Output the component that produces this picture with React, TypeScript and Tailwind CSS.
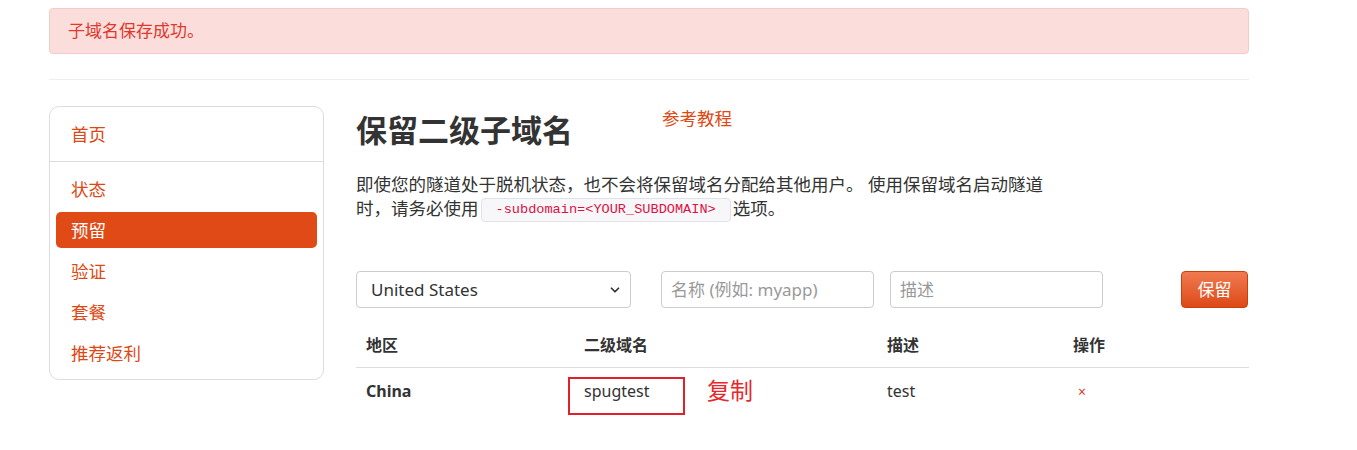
import { ChevronDown } from "lucide-react";

const font = { fontFamily: '"Noto Sans", "Noto Sans CJK SC", sans-serif' };

const navItems = ["状态", "预留", "验证", "套餐", "推荐返利"];

export default function App() {
    return (
        <div className="min-h-[450px] bg-white text-[#333]" style={font}>
            <div className="ml-[49px] w-[1200px]">
                {/* Alert */}
                <div className="mt-2 h-[46px] flex items-center pl-[18px] rounded-[4px] border border-[#f5cbc7] bg-[#fbdedb] text-[#df382c] text-[17px]">
                    子域名保存成功。
                </div>

                <div className="mt-[25px] h-px bg-[#eeeeee]" />

                <div className="mt-[26px] flex">
                    {/* Sidebar */}
                    <div className="w-[275px] shrink-0 self-start rounded-[10px] border border-[#dddddd] px-[6px] pt-[9px] pb-[8px]">
                        <div className="h-[36px] flex items-center pl-[15px] text-[17.5px] text-[#dd4814]">首页</div>
                        <div className="-mx-[6px] my-[9px] h-px bg-[#dddddd]" />
                        <div className="flex flex-col gap-[5px]">
                            {navItems.map(item => (
                                <div
                                    key={item}
                                    className={
                                        item === "预留"
                                            ? "h-[36px] flex items-center pl-[15px] text-[17.5px] rounded-[5px] bg-[#df4a16] text-white"
                                            : "h-[36px] flex items-center pl-[15px] text-[17.5px] text-[#dd4814]"
                                    }
                                >
                                    {item}
                                </div>
                            ))}
                        </div>
                    </div>

                    {/* Main */}
                    <div className="ml-[32px] flex-1">
                        <div className="flex items-start">
                            <h1 className="w-[306px] mt-[6px] text-[31px] leading-[36px] font-bold text-[#333]">保留二级子域名</h1>
                            <a className="mt-[2px] text-[17.5px] leading-[20px] text-[#dd4814]">参考教程</a>
                        </div>

                        <p className="mt-[24px] text-[17.5px] leading-[24px] text-[#333]">
                            即使您的隧道处于脱机状态，也不会将保留域名分配给其他用户。 使用保留域名启动隧道
                            <br />
                            时，请务必使用
                            <code
                                className="inline-block h-[24px] leading-[22px] align-middle mx-[2px] px-[14px] rounded-[4px] border border-[#e1e1e8] bg-[#f7f7f9] text-[#dd1144] text-[13.6px]"
                                style={{ fontFamily: '"Liberation Mono", monospace' }}
                            >
                                -subdomain=&lt;YOUR_SUBDOMAIN&gt;
                            </code>
                            选项。
                        </p>

                        {/* Form */}
                        <div className="mt-[49px] flex items-center">
                            <div className="w-[275px] h-[37px] flex items-center justify-between pl-[14px] pr-[8px] rounded-[4px] border border-[#cccccc] text-[17px] text-[#333]">
                                <span>United States</span>
                                <ChevronDown size={14} strokeWidth={3} className="text-[#333]" />
                            </div>
                            <div className="ml-[30px] w-[213px] h-[37px] flex items-center px-[9px] rounded-[4px] border border-[#cccccc] text-[17px] text-[#999]">
                                名称 (例如: myapp)
                            </div>
                            <div className="ml-[16px] w-[213px] h-[37px] flex items-center px-[9px] rounded-[4px] border border-[#cccccc] text-[17px] text-[#999]">
                                描述
                            </div>
                            <button className="ml-auto mr-px w-[67px] h-[37px] rounded-[4px] border border-[#c9400f] bg-gradient-to-b from-[#f07a4e] to-[#dd4814] text-white text-[17px]">
                                保留
                            </button>
                        </div>

                        {/* Table */}
                        <div className="mt-[15px] text-[16px]">
                            <div className="flex h-[45px] items-center border-b border-[#dddddd] font-bold">
                                <div className="w-[218px] pl-[10px]">地区</div>
                                <div className="w-[303px] pl-[10px]">二级域名</div>
                                <div className="w-[186px] pl-[10px]">描述</div>
                                <div className="flex-1 pl-[10px]">操作</div>
                            </div>
                            <div className="flex h-[46px] items-center">
                                <div className="w-[218px] pl-[10px] font-bold">China</div>
                                <div className="w-[303px] pl-[10px]">
                                    <span className="relative block leading-[24px]">
                                        spugtest
                                        <span className="absolute left-[-16px] top-[-2px] w-[117px] h-[38px] border-2 border-[#e0202a]" />
                                        <span className="absolute left-[123px] top-[-4px] text-[23px] leading-[30px] whitespace-nowrap text-[#e8262b]">复制</span>
                                    </span>
                                </div>
                                <div className="w-[186px] pl-[10px]">test</div>
                                <div className="flex-1 pl-[15px] text-[14px] text-[#df382c]">×</div>
                            </div>
                        </div>
                    </div>
                </div>
            </div>
        </div>
    );
}
